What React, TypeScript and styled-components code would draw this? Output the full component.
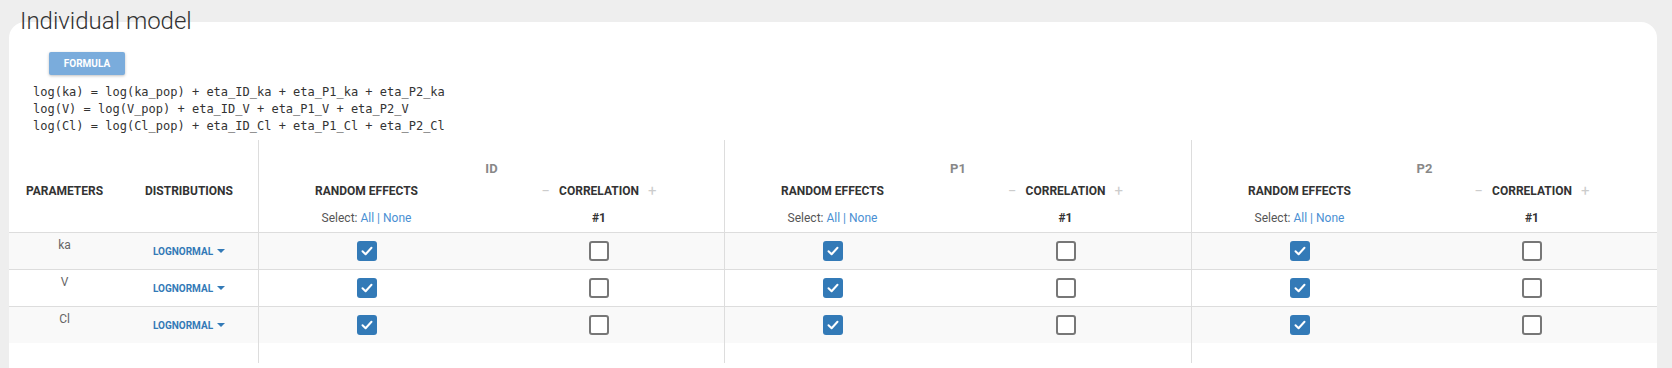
import React from 'react'
import styled, { createGlobalStyle } from 'styled-components'

const GlobalStyle = createGlobalStyle`
  body {
    margin: 0;
    background: #eeeeee;
    font-family: Roboto, 'Liberation Sans', sans-serif;
    color: #333;
  }
`

const COLS = '111px 138px 216px 250px 216px 251px 216px 1fr'

const Page = styled.div`
  min-height: 100vh;
  overflow: hidden;
`

const Title = styled.h1`
  position: relative;
  z-index: 1;
  margin: 7px 0 -13px 20px;
  font-size: 24px;
  font-weight: 300;
  line-height: 28px;
  color: #333;
`

const Card = styled.section`
  margin: 0 15px 0 9px;
  padding-top: 30px;
  background: white;
  border-radius: 16px 16px 0 0;
  min-height: calc(100vh - 52px);
`

const FormulaButton = styled.button`
  display: block;
  margin-left: 40px;
  width: 76px;
  height: 23px;
  padding: 0;
  border: none;
  border-radius: 2px;
  background: #7aacdc;
  box-shadow: 0 1px 3px rgba(0, 0, 0, 0.25);
  color: white;
  font-family: Roboto, 'Liberation Sans', sans-serif;
  font-size: 10px;
  font-weight: 700;
`

const Formula = styled.pre`
  margin: 9px 0 0 24px;
  font-family: 'DejaVu Sans Mono', 'Liberation Mono', monospace;
  font-size: 12px;
  line-height: 17px;
  color: #333;
`

const Table = styled.div`
  margin-top: 5px;
`

const HeaderGrid = styled.div`
  display: grid;
  grid-template-columns: ${COLS};
  grid-template-rows: 40px 22px 30px;
  border-bottom: 1px solid #dddddd;
`

const HeadCell = styled.div<{ $col: number; $row: number; $span?: number; $border?: boolean }>`
  grid-column: ${(p) => p.$col} / span ${(p) => p.$span ?? 1};
  grid-row: ${(p) => p.$row};
  display: flex;
  justify-content: center;
  border-left: ${(p) => (p.$border ? '1px solid #dddddd' : 'none')};
`

const ColTitle = styled.span`
  font-size: 12px;
  font-weight: 700;
  line-height: 22px;
  color: #333;
`

const GroupTitle = styled.span`
  padding-top: 20px;
  font-size: 13px;
  font-weight: 700;
  line-height: 18px;
  color: #888;
`

const Stepper = styled.span`
  margin: 0 9px;
  font-size: 15px;
  font-weight: 400;
  line-height: 22px;
  color: #cccccc;
`

const SubText = styled.span<{ $bold?: boolean }>`
  padding-top: 6px;
  font-size: 12px;
  font-weight: ${(p) => (p.$bold ? 700 : 400)};
  line-height: 20px;
  color: ${(p) => (p.$bold ? '#333' : '#555')};
`

const Link = styled.span`
  color: #4a8fd3;
`

const Row = styled.div<{ $striped?: boolean; $last?: boolean }>`
  display: grid;
  grid-template-columns: ${COLS};
  height: ${(p) => (p.$last ? '36px' : '37px')};
  box-sizing: border-box;
  background: ${(p) => (p.$striped ? '#f9f9f9' : 'white')};
  border-bottom: ${(p) => (p.$last ? 'none' : '1px solid #dddddd')};
`

const Filler = styled.div`
  display: grid;
  grid-template-columns: ${COLS};
  height: 20px;
`

const Cell = styled.div<{ $border?: boolean }>`
  display: flex;
  align-items: center;
  justify-content: center;
  border-left: ${(p) => (p.$border ? '1px solid #dddddd' : 'none')};
`

const ParamName = styled.div`
  padding-top: 4px;
  text-align: center;
  font-size: 12px;
  line-height: 16px;
  color: #666;
`

const Dist = styled.span`
  display: flex;
  align-items: center;
  font-size: 10px;
  font-weight: 700;
  color: #337ab7;
`

const Caret = styled.span`
  margin-left: 4px;
  border-left: 4px solid transparent;
  border-right: 4px solid transparent;
  border-top: 4px solid #337ab7;
`

const Box = styled.span<{ $checked?: boolean }>`
  display: flex;
  align-items: center;
  justify-content: center;
  width: 20px;
  height: 20px;
  box-sizing: border-box;
  border-radius: 3px;
  background: ${(p) => (p.$checked ? '#337ab7' : 'white')};
  border: ${(p) => (p.$checked ? 'none' : '2px solid #777')};
`

const groups = ['ID', 'P1', 'P2']
const params = ['ka', 'V', 'Cl']

const formula = [
  'log(ka) = log(ka_pop) + eta_ID_ka + eta_P1_ka + eta_P2_ka',
  'log(V) = log(V_pop) + eta_ID_V + eta_P1_V + eta_P2_V',
  'log(Cl) = log(Cl_pop) + eta_ID_Cl + eta_P1_Cl + eta_P2_Cl',
]

function Checkbox({ checked }: { checked?: boolean }) {
  return (
    <Box $checked={checked}>
      {checked && (
        <svg width="14" height="14" viewBox="0 0 14 14">
          <path d="M2.5 7.2 L5.6 10.2 L11.5 3.8" fill="none" stroke="white" strokeWidth="2" strokeLinecap="round" strokeLinejoin="round" />
        </svg>
      )}
    </Box>
  )
}

export default function App() {
  return (
    <Page>
      <GlobalStyle />
      <Title>Individual model</Title>
      <Card>
        <FormulaButton>FORMULA</FormulaButton>
        <Formula>{formula.join('\n')}</Formula>
        <Table>
          <HeaderGrid>
            <HeadCell $col={1} $row={2}>
              <ColTitle>PARAMETERS</ColTitle>
            </HeadCell>
            <HeadCell $col={2} $row={2}>
              <ColTitle>DISTRIBUTIONS</ColTitle>
            </HeadCell>
            {groups.map((g, i) => (
              <React.Fragment key={g}>
                <HeadCell $col={3 + i * 2} $row={1} $span={2} $border>
                  <GroupTitle>{g}</GroupTitle>
                </HeadCell>
                <HeadCell $col={3 + i * 2} $row={2} $border>
                  <ColTitle>RANDOM EFFECTS</ColTitle>
                </HeadCell>
                <HeadCell $col={4 + i * 2} $row={2}>
                  <Stepper>−</Stepper>
                  <ColTitle>CORRELATION</ColTitle>
                  <Stepper>+</Stepper>
                </HeadCell>
                <HeadCell $col={3 + i * 2} $row={3} $border>
                  <SubText>
                    Select: <Link>All</Link> <Link>|</Link> <Link>None</Link>
                  </SubText>
                </HeadCell>
                <HeadCell $col={4 + i * 2} $row={3}>
                  <SubText $bold>#1</SubText>
                </HeadCell>
              </React.Fragment>
            ))}
          </HeaderGrid>
          {params.map((p, r) => (
            <Row key={p} $striped={r % 2 === 0} $last={r === params.length - 1}>
              <ParamName>{p}</ParamName>
              <Cell>
                <Dist>
                  LOGNORMAL
                  <Caret />
                </Dist>
              </Cell>
              {groups.map((g) => (
                <React.Fragment key={g}>
                  <Cell $border>
                    <Checkbox checked />
                  </Cell>
                  <Cell>
                    <Checkbox />
                  </Cell>
                </React.Fragment>
              ))}
            </Row>
          ))}
          <Filler>
            <div />
            <div />
            {groups.map((g) => (
              <React.Fragment key={g}>
                <Cell $border />
                <Cell />
              </React.Fragment>
            ))}
          </Filler>
        </Table>
      </Card>
    </Page>
  )
}
